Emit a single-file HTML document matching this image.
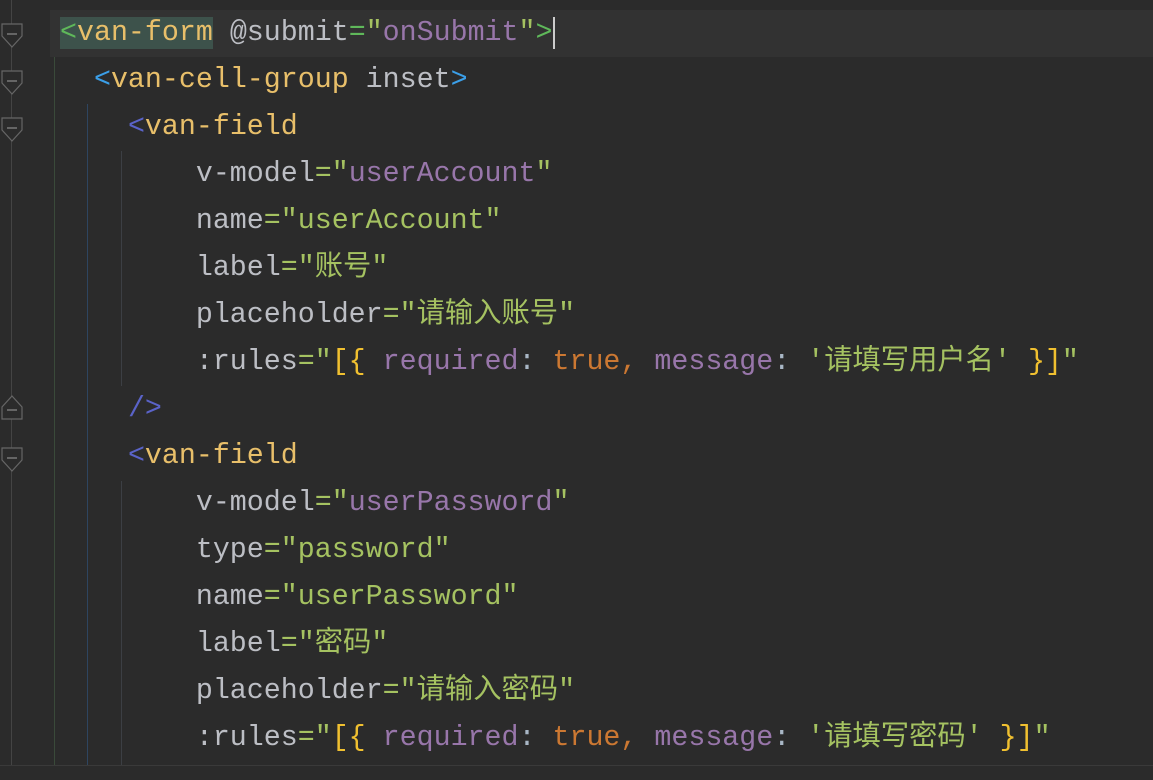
<!DOCTYPE html>
<html style="overflow:hidden;width:1153px;height:780px"><head><meta charset="utf-8"><style>
body{margin:0;width:1153px;height:780px;background:#2b2b2b;overflow:hidden;position:relative;font-family:"Liberation Mono","Noto Sans CJK SC",monospace;font-size:28.3px;}
.l{position:absolute;left:60px;height:47px;line-height:47px;white-space:pre;color:#bcbec4;}
.cur{position:absolute;left:50px;top:10px;width:1103px;height:47px;background:#323232;}
.t{color:#e8bf6a}.g{color:#5fb85a}.b{color:#3b9fe8}.v{color:#5a63c8}
.s{color:#a5c261}.p{color:#9876aa}.o{color:#cc7832}.q{color:#a9b7c6}.y{color:#f0c030}
.sel{background:#3d524b}
.guide{position:absolute;width:1px;}
.sep{position:absolute;left:0;top:765px;width:1153px;height:1px;background:#3a3a3a}
.tx{position:absolute;left:0;top:5px;width:1153px;height:760px;overflow:hidden}
</style></head><body>
<div class="cur"></div>
<div class="guide" style="left:11px;top:0;height:765px;background:#444"></div>
<div class="guide" style="left:54px;top:57px;height:708px;background:#3a4a3a"></div>
<div class="guide" style="left:87px;top:104px;height:661px;background:#2e4560"></div>
<div class="guide" style="left:121px;top:151px;height:235px;background:#3c3f44"></div>
<div class="guide" style="left:121px;top:481px;height:284px;background:#3c3f44"></div>
<svg style="position:absolute;left:0;top:0" width="30" height="780">
<g fill="#2b2b2b" stroke="#666" stroke-width="1.2">
<path d="M2 24h20v12l-10 11l-10-11z"/><path d="M2 71h20v12l-10 11l-10-11z"/><path d="M2 118h20v12l-10 11l-10-11z"/>
<path d="M2 419h20v-12l-10-11l-10 11z"/><path d="M2 448h20v12l-10 11l-10-11z"/></g>
<g stroke="#888" stroke-width="1.2"><path d="M7 34h10M7 81h10M7 128h10M7 410h10M7 458h10"/></g>
</svg>
<div class="tx">
<div class="l" style="top:5px"><span class="sel"><span class="g">&lt;</span><span class="t">van-form</span></span> @submit<span class="g">=</span><span class="s">"</span><span class="p">onSubmit</span><span class="s">"</span><span class="g">&gt;</span><span style="border-left:2px solid #ccc"> </span></div>
<div class="l" style="top:52px">  <span class="b">&lt;</span><span class="t">van-cell-group</span> inset<span class="b">&gt;</span></div>
<div class="l" style="top:99px">    <span class="v">&lt;</span><span class="t">van-field</span></div>
<div class="l" style="top:146px">        v-model<span class="s">="</span><span class="p">userAccount</span><span class="s">"</span></div>
<div class="l" style="top:193px">        name<span class="s">="userAccount"</span></div>
<div class="l" style="top:240px">        label<span class="s">="账号"</span></div>
<div class="l" style="top:287px">        placeholder<span class="s">="请输入账号"</span></div>
<div class="l" style="top:334px">        :rules<span class="s">="</span><span class="y">[{</span> <span class="p">required</span><span class="q">:</span> <span class="o">true,</span> <span class="p">message</span><span class="q">:</span> <span class="s">'请填写用户名'</span> <span class="y">}]</span><span class="s">"</span></div>
<div class="l" style="top:381px">    <span class="v">/&gt;</span></div>
<div class="l" style="top:428px">    <span class="v">&lt;</span><span class="t">van-field</span></div>
<div class="l" style="top:475px">        v-model<span class="s">="</span><span class="p">userPassword</span><span class="s">"</span></div>
<div class="l" style="top:522px">        type<span class="s">="password"</span></div>
<div class="l" style="top:569px">        name<span class="s">="userPassword"</span></div>
<div class="l" style="top:616px">        label<span class="s">="密码"</span></div>
<div class="l" style="top:663px">        placeholder<span class="s">="请输入密码"</span></div>
<div class="l" style="top:710px">        :rules<span class="s">="</span><span class="y">[{</span> <span class="p">required</span><span class="q">:</span> <span class="o">true,</span> <span class="p">message</span><span class="q">:</span> <span class="s">'请填写密码'</span> <span class="y">}]</span><span class="s">"</span></div>
</div>
<div class="sep"></div>
</body></html>
